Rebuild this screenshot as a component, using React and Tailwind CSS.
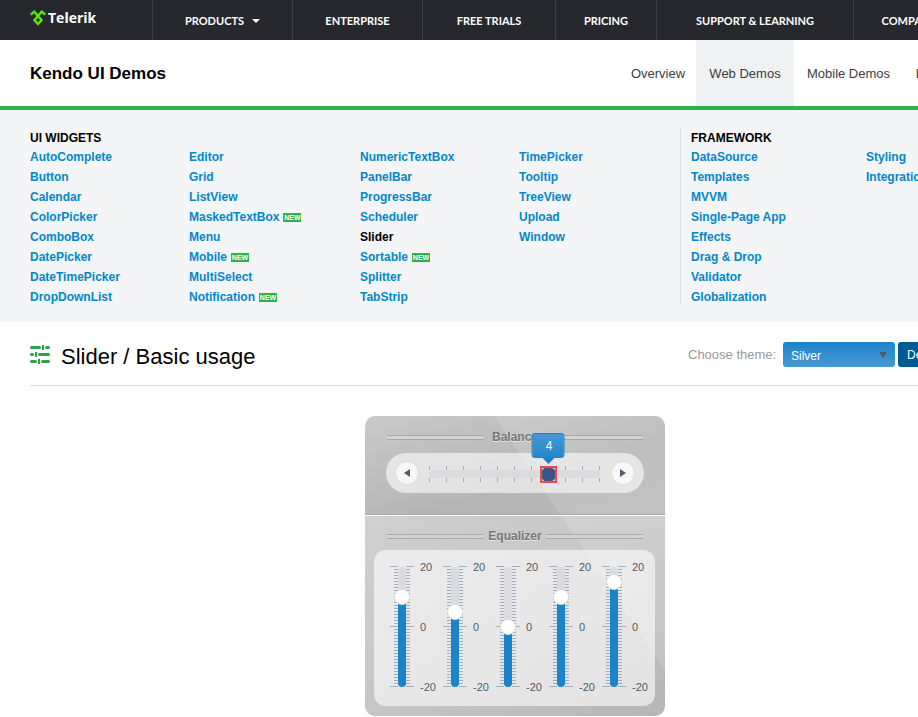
import React, { useState } from "react";

const NAV = [
  { label: "PRODUCTS", width: "w-[140px]", caret: true },
  { label: "ENTERPRISE", width: "w-[130px]" },
  { label: "FREE TRIALS", width: "w-[133px]" },
  { label: "PRICING", width: "w-[101px]" },
  { label: "SUPPORT & LEARNING", width: "w-[197px]" },
  { label: "COMPANY", width: "w-[112px]" },
];

const TABS = [
  { label: "Overview", width: "w-[76px]" },
  { label: "Web Demos", width: "w-[98px]", active: true },
  { label: "Mobile Demos", width: "w-[109px]" },
  { label: "Documentation", width: "w-[113px]" },
];

const WIDGETS = [
  { width: "w-[159px]", items: ["AutoComplete", "Button", "Calendar", "ColorPicker", "ComboBox", "DatePicker", "DateTimePicker", "DropDownList"] },
  { width: "w-[171px]", items: ["Editor", "Grid", "ListView", "MaskedTextBox", "Menu", "Mobile", "MultiSelect", "Notification"] },
  { width: "w-[159px]", items: ["NumericTextBox", "PanelBar", "ProgressBar", "Scheduler", "Slider", "Sortable", "Splitter", "TabStrip"] },
  { width: "w-[161px]", items: ["TimePicker", "Tooltip", "TreeView", "Upload", "Window"] },
];

const FRAMEWORK = [
  { width: "w-[175px]", items: ["DataSource", "Templates", "MVVM", "Single-Page App", "Effects", "Drag & Drop", "Validator", "Globalization"] },
  { width: "w-[134px]", items: ["Styling", "Integration"] },
];

const NEW_ITEMS = ["MaskedTextBox", "Mobile", "Notification", "Sortable"];

function Logo() {
  return (
    <a href="#" className="flex w-[122px] items-center gap-[2px] pb-1 text-white" aria-label="Telerik">
      <svg width="16" height="16" viewBox="0 0 16 16" fill="none" stroke="#5ce500" strokeWidth="2.400">
        <path d="M0.800 4.600 L4.300 1.600 L11.600 10.200 L8 14 L4.400 10.200 L11.700 1.600 L15.200 4.600" />
      </svg>
      <span className="font-['Open_Sans',sans-serif] text-[14px] leading-5 font-bold">Telerik</span>
    </a>
  );
}

function TopNav() {
  return (
    <header className="flex h-10 bg-[#27282d] pl-[30px]">
      <Logo />
      <nav className="flex font-['Lato',sans-serif] text-[11px] font-bold text-white">
        {NAV.map((n) => (
          <a key={n.label} href="#" className={`flex shrink-0 items-center justify-center gap-2 border-l border-[#3e3f44] pt-[2px] whitespace-nowrap ${n.width}`}>
            {n.label}
            {n.caret && (
              <svg width="8" height="4" viewBox="0 0 8 4">
                <path d="M0 0h8L4 4z" fill="#fff" />
              </svg>
            )}
          </a>
        ))}
      </nav>
    </header>
  );
}

function SubHeader() {
  return (
    <div className="flex h-[70px] items-stretch border-b-4 border-[#2fb24c] pl-[30px]">
      <h1 className="flex w-[590px] items-center pt-[2px] text-[17px] font-bold text-black">Kendo UI Demos</h1>
      <nav className="flex text-[13px] text-[#3d3d3d]">
        {TABS.map((t) => (
          <a key={t.label} href="#" className={`flex items-center justify-center pt-[2px] whitespace-nowrap ${t.width} ${t.active ? "bg-[#f0f1f3]" : ""}`}>
            {t.label}
          </a>
        ))}
      </nav>
    </div>
  );
}

function LinkColumns({ columns }) {
  return (
    <div className="flex">
      {columns.map((col) => (
        <ul key={col.items[0]} className={`shrink-0 ${col.width}`}>
          {col.items.map((item) => (
            <li key={item} className="flex h-5 items-center gap-1">
              <a href="#" className={item === "Slider" ? "text-black" : "text-[#0487c9]"}>{item}</a>
              {NEW_ITEMS.includes(item) && (
                <span className="flex h-[9px] w-[18px] items-center justify-center bg-[#2fb24c] text-[7px] leading-none text-white">NEW</span>
              )}
            </li>
          ))}
        </ul>
      ))}
    </div>
  );
}

function Menu() {
  return (
    <div className="flex h-[212px] bg-[#f3f5f7] pt-[18px] pb-[18px] pl-[30px] text-[12px] font-bold">
      <section className="shrink-0">
        <h2 className="h-[19px] leading-5 text-black">UI WIDGETS</h2>
        <LinkColumns columns={WIDGETS} />
      </section>
      <section className="shrink-0 border-l border-[#d9dce0] pl-[10px]">
        <h2 className="h-[19px] leading-5 text-black">FRAMEWORK</h2>
        <LinkColumns columns={FRAMEWORK} />
      </section>
    </div>
  );
}

function SliderIcon() {
  return (
    <svg width="20" height="20" viewBox="0 0 20 20" stroke="#2ba547" strokeWidth="3" strokeLinecap="round">
      <path d="M1.500 2.500H9.500M16.500 2.500H18.500M1.500 9.500H2.500M9.500 9.500H18.500M1.500 16.500H5.500M12.500 16.500H18.500" />
      <path d="M13 0V5M6 7V12M9 14V19" strokeWidth="2" strokeLinecap="butt" />
    </svg>
  );
}

function TitleRow() {
  return (
    <div className="flex h-16 justify-between border-b border-[#dcdcdc]">
      <div className="flex gap-[11px] pt-[23px]">
        <SliderIcon />
        <h2 className="text-[22px] leading-6 text-black">Slider / Basic usage</h2>
      </div>
      <div className="flex w-[312px] items-start pt-5 text-[12px]">
        <label htmlFor="theme" className="w-[95px] shrink-0 text-[13px] leading-[25px] text-[#999]">Choose theme:</label>
        <div className="grid w-[112px] items-center">
          <select id="theme" className="col-start-1 row-start-1 h-[25px] w-full appearance-none rounded-[3px] bg-linear-to-b from-[#1b84c9] to-[#4599d5] pt-[2px] pl-2 text-white">
            <option>Silver</option>
            <option>Default</option>
          </select>
          <svg width="8" height="6" viewBox="0 0 8 6" className="pointer-events-none col-start-1 row-start-1 mr-2 justify-self-end">
            <path d="M0 0h8L4 6z" fill="#4d5a66" />
          </svg>
        </div>
        <button className="ml-[3px] h-[25px] grow rounded-[3px] bg-[#005a94] pl-[9px] text-left text-white">Default</button>
      </div>
    </div>
  );
}

function PanelTitle({ children }) {
  const rule = "h-[5px] w-[97px] border-y border-[#a9a9a9] bg-[#d2d2d2]";
  return (
    <h3 className="flex items-center justify-between px-[22px] text-[12px] leading-4 font-bold text-[#777] [text-shadow:0_1px_0_#e4e4e4]">
      <span className={rule} />
      {children}
      <span className={rule} />
    </h3>
  );
}

function Balance() {
  const [value, setValue] = useState(4);
  const step = (d) => setValue((v) => Math.max(-10, Math.min(10, v + d)));
  const round = "flex size-6 items-center justify-center rounded-full border border-[#dedede] bg-[#f7f7f8]";
  return (
    <div className="mx-[21px] mt-2 flex h-10 items-center justify-between rounded-full bg-white/60 px-[9px]">
      <button className={round} aria-label="Decrease" onClick={() => step(-2)}>
        <svg width="6" height="8" viewBox="0 0 6 8"><path d="M6 0v8L0 4z" fill="#515d6b" /></svg>
      </button>
      <div className="relative grid h-10 w-[188px] items-center pt-[2px]">
        <svg width="188" height="18" viewBox="0 0 188 18" className="col-start-1 row-start-1">
          {Array.from({ length: 11 }, (_, i) => (
            <path key={i} d={`M${8.5 + i * 17} 1v4M${8.5 + i * 17} 13v4`} stroke="#a0aec2" />
          ))}
          <rect x="8" y="5" width="171" height="8" rx="4" fill="#dbdbdd" />
        </svg>
        <input
          type="range"
          aria-label="Balance"
          min="-10"
          max="10"
          step="2"
          value={value}
          onChange={(e) => setValue(+e.target.value)}
          className="col-start-1 row-start-1 h-[18px] w-[187px] appearance-none bg-transparent outline-none [&::-webkit-slider-thumb]:size-[17px] [&::-webkit-slider-thumb]:appearance-none [&::-webkit-slider-thumb]:border-2 [&::-webkit-slider-thumb]:border-[#ee4a4e] [&::-webkit-slider-thumb]:bg-[radial-gradient(circle,#37568a_7px,#f3c4c8_8px)]"
        />
        <output
          className="absolute -top-5 flex h-[25px] w-[33px] -translate-x-1/2 items-center justify-center rounded-[3px] border border-[#1984c8] bg-linear-to-b from-[#4399d5] to-[#2288ca] pl-[2px] text-[12px] text-white"
          style={{ left: 8 + ((value + 10) / 20) * 170 }}
        >
          {value}
          <svg width="12" height="6" viewBox="0 0 12 6" className="absolute top-6 left-[10px]">
            <path d="M0 0h12L6 6z" fill="#1984c8" />
          </svg>
        </output>
      </div>
      <button className={round} aria-label="Increase" onClick={() => step(2)}>
        <svg width="6" height="8" viewBox="0 0 6 8"><path d="M0 0v8L6 4z" fill="#515d6b" /></svg>
      </button>
    </div>
  );
}

function Band({ initial, index }) {
  const [value, setValue] = useState(initial);
  const fillTop = 68 - value * 3;
  return (
    <div className="flex w-[53px] shrink-0 gap-[2px]">
      <div className="grid h-[136px] w-8 shrink-0 justify-items-center">
        <svg width="32" height="136" viewBox="0 0 32 136" className="col-start-1 row-start-1">
          {Array.from({ length: 41 }, (_, i) => {
            const inset = i % 20 === 0 ? 4 : 8;
            return <path key={i} d={`M${inset} ${7.5 + i * 3}H12M20 ${7.5 + i * 3}H${32 - inset}`} stroke="#a0aec2" />;
          })}
          <rect x="12" y="8" width="8" height="120" rx="4" fill="#dbdbdd" />
          <path d={`M12 ${fillTop}H20V124a4 4 0 0 1-8 0z`} fill="#1984c8" />
        </svg>
        <input
          type="range"
          aria-label={`Equalizer band ${index + 1}`}
          min="-20"
          max="20"
          value={value}
          onChange={(e) => setValue(+e.target.value)}
          className="col-start-1 row-start-1 h-[136px] w-4 appearance-none bg-transparent outline-none [direction:rtl] [writing-mode:vertical-lr] [&::-webkit-slider-thumb]:size-4 [&::-webkit-slider-thumb]:appearance-none [&::-webkit-slider-thumb]:rounded-full [&::-webkit-slider-thumb]:border [&::-webkit-slider-thumb]:border-[#dedee0] [&::-webkit-slider-thumb]:bg-white"
        />
      </div>
      <div className="flex h-[136px] flex-col justify-between text-[11px] leading-4 text-[#515967]">
        <span>20</span>
        <span>0</span>
        <span className="whitespace-nowrap">-20</span>
      </div>
    </div>
  );
}

function Mixer() {
  return (
    <div className="relative mx-auto mt-[30px] h-[300px] w-[300px] overflow-hidden rounded-[10px]">
      <svg width="300" height="300" viewBox="0 0 300 300" className="absolute inset-0">
        <defs>
          <linearGradient id="top" x1="0" y1="0" x2="1" y2="1">
            <stop offset="0" stopColor="#c9c9c9" />
            <stop offset="0.600" stopColor="#b5b5b5" />
            <stop offset="1" stopColor="#b7b7b7" />
          </linearGradient>
          <linearGradient id="bottom" x1="0" y1="0" x2="1" y2="1">
            <stop offset="0" stopColor="#d0d0d0" />
            <stop offset="0.500" stopColor="#c6c6c6" />
            <stop offset="1" stopColor="#b6b6b6" />
          </linearGradient>
        </defs>
        <rect width="300" height="100" fill="url(#top)" />
        <rect y="100" width="300" height="200" fill="url(#bottom)" />
        <path d="M129 0Q216 130 300 254V0z" fill="#fff" fillOpacity="0.140" />
        <path d="M0 98.500H300" stroke="#a9a9a9" />
        <path d="M0 99.500H300" stroke="#fff" />
      </svg>
      <div className="relative h-[100px] pt-[13px]">
        <PanelTitle>Balance</PanelTitle>
        <Balance />
      </div>
      <div className="relative pt-3">
        <PanelTitle>Equalizer</PanelTitle>
        <div className="mt-[6px] mr-[10px] ml-[9px] flex h-[156px] rounded-[12px] bg-white/60 pt-[9px] pl-3">
          {[10, 5, 0, 10, 15].map((v, i) => (
            <Band key={i} index={i} initial={v} />
          ))}
        </div>
      </div>
    </div>
  );
}

export default function App() {
  return (
    <div className="overflow-x-hidden bg-white font-['Liberation_Sans',Arial,sans-serif]">
      <div className="min-w-[1030px]">
        <TopNav />
        <SubHeader />
        <Menu />
        <main className="px-[30px]">
          <TitleRow />
          <Mixer />
        </main>
      </div>
    </div>
  );
}
